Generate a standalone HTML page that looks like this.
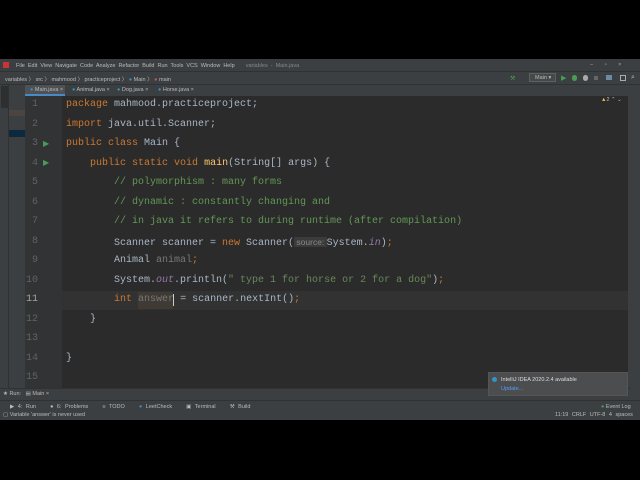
<!DOCTYPE html>
<html><head><meta charset="utf-8"><style>
*{margin:0;padding:0;box-sizing:border-box}
body{width:640px;height:480px;background:#000;position:relative;overflow:hidden;font-family:"Liberation Sans",sans-serif}
.a{position:absolute}
.ui{font-size:5.5px;color:#bbb;white-space:nowrap}
.code{font-family:"Liberation Mono",monospace;font-size:10px;color:#a9b7c6;white-space:pre;position:absolute;left:66px;line-height:12px}
.k{color:#cc7832}.c{color:#629755}.s{color:#6a8759}.g{color:#787878}.p{color:#9876aa;font-style:italic}
.ln{position:absolute;left:24px;width:14px;text-align:right;font-family:"Liberation Mono",monospace;font-size:10px;color:#606366}
</style></head><body>
<div class="a" style="left:0;top:59px;width:640px;height:361px;background:#3c3f41"></div>
<div class="a ui" style="left:3px;top:62px;width:6px;height:6px;background:#c33"></div>
<div class="a ui" style="left:16px;top:63px;word-spacing:1.5px">File Edit View Navigate Code Analyze Refactor Build Run Tools VCS Window Help <span style="color:#888;margin-left:8px">variables - Main.java</span></div>
<div class="a ui" style="left:590px;top:62px;color:#aaa;word-spacing:10px">– ▫ ×</div>
<div class="a" style="left:0;top:71px;width:640px;height:1px;background:#2f3133"></div>
<div class="a ui" style="left:5px;top:75px">variables 〉 src 〉 mahmood 〉 practiceproject 〉 <span style="color:#3592c4">●</span> Main 〉 <span style="color:#c75450">●</span> main</div>
<div class="a" style="left:529px;top:73px;width:27px;height:9px;border:1px solid #5e6060;background:#45494a"></div>
<div class="a ui" style="left:535px;top:75px">Main ▾</div>
<div class="a" style="left:510px;top:75px;color:#499c54;font-size:6px">⚒</div>
<div class="a" style="left:561px;top:74px;color:#499c54;font-size:7px">▶</div>
<div class="a" style="left:572px;top:75px;width:5px;height:6px;border-radius:3px;background:#499c54"></div>
<div class="a" style="left:583px;top:75px;width:5px;height:6px;border-radius:3px;background:#aaa"></div>
<div class="a" style="left:594px;top:76px;width:4px;height:4px;background:#666"></div>
<div class="a" style="left:606px;top:75px;width:6px;height:5px;background:#6a8ba6"></div>
<div class="a" style="left:620px;top:75px;width:6px;height:6px;border:1px solid #aaa"></div>
<div class="a ui" style="left:631px;top:74px;font-size:7px">⌕</div>
<div class="a" style="left:0;top:84px;width:640px;height:1px;background:#2f3133"></div>
<div class="a" style="left:0;top:85px;width:9px;height:315px;background:#3c3f41;border-right:1px solid #2f3133"></div>
<div class="a" style="left:1px;top:86px;width:7px;height:22px;background:#2d2f30"></div>
<div class="a" style="left:9px;top:85px;width:16px;height:303px;background:#3c3f41"></div>
<div class="a" style="left:9px;top:110px;width:16px;height:6px;background:#4a4540"></div>
<div class="a" style="left:9px;top:130px;width:16px;height:7px;background:#0d293e"></div>
<div class="a" style="left:25px;top:85px;width:605px;height:11px;background:#3c3f41"></div>
<div class="a" style="left:25px;top:85px;width:40px;height:11px;background:#4e5254;border-bottom:2px solid #4a88c7"></div>
<div class="a ui" style="left:30px;top:87px"><span style="color:#3592c4">●</span> Main.java ×</div>
<div class="a ui" style="left:72px;top:87px"><span style="color:#3592c4">●</span> Animal.java ×</div>
<div class="a ui" style="left:117px;top:87px"><span style="color:#3592c4">●</span> Dog.java ×</div>
<div class="a ui" style="left:158px;top:87px"><span style="color:#3592c4">●</span> Horse.java ×</div>
<div class="a" style="left:25px;top:96px;width:37px;height:292px;background:#313335"></div>
<div class="a" style="left:62px;top:96px;width:566px;height:292px;background:#2b2b2b"></div>
<div class="a" style="left:630px;top:85px;width:10px;height:315px;background:#3c3f41"></div>
<div class="a" style="left:62px;top:291px;width:566px;height:19px;background:#323232"></div>
<div class="a" style="left:138px;top:292px;width:35px;height:17px;background:#3f3a33"></div>
<div class="a" style="left:173px;top:294px;width:1px;height:12px;background:#ccc"></div>
<div class="a ui" style="left:601px;top:97px;color:#bbb"><span style="color:#e0b84a">▲</span>2 ⌃ ⌄</div>
<div class="a" style="left:43px;top:139px;color:#499c54;font-size:8px">▶</div>
<div class="a" style="left:43px;top:158px;color:#499c54;font-size:8px">▶</div>
<div class="ln" style="top:99px">1</div><div class="ln" style="top:119px">2</div><div class="ln" style="top:138px">3</div><div class="ln" style="top:158px">4</div><div class="ln" style="top:177px">5</div><div class="ln" style="top:197px">6</div><div class="ln" style="top:216px">7</div><div class="ln" style="top:236px">8</div><div class="ln" style="top:255px">9</div><div class="ln" style="top:275px">10</div><div class="ln" style="top:294px;color:#a4a3a3">11</div><div class="ln" style="top:314px">12</div><div class="ln" style="top:333px">13</div><div class="ln" style="top:353px">14</div><div class="ln" style="top:372px">15</div>
<div class="code" style="top:99px"><span class="k">package</span> mahmood.practiceproject;</div>
<div class="code" style="top:119px"><span class="k">import</span> java.util.Scanner;</div>
<div class="code" style="top:138px"><span class="k">public class</span> Main {</div>
<div class="code" style="top:158px">    <span class="k">public static void</span> <span style="color:#ffc66d">main</span>(String[] args) {</div>
<div class="code c" style="top:177px">        // polymorphism : many forms</div>
<div class="code c" style="top:197px">        // dynamic : constantly changing and</div>
<div class="code c" style="top:216px">        // in java it refers to during runtime (after compilation)</div>
<div class="code" style="top:236px">        Scanner scanner = <span class="k">new</span> Scanner(<span style="background:#3b3b3b;color:#888;font-family:'Liberation Sans',sans-serif;font-size:8.5px"> source: </span>System.<span class="p">in</span>)<span class="k">;</span></div>
<div class="code" style="top:255px">        Animal <span class="g">animal</span><span class="k">;</span></div>
<div class="code" style="top:275px">        System.<span class="p">out</span>.println(<span class="s">" type 1 for horse or 2 for a dog"</span>)<span class="k">;</span></div>
<div class="code" style="top:294px">        <span class="k">int</span> <span class="g">answer</span> = scanner.nextInt()<span class="k">;</span></div>
<div class="code" style="top:314px">    }</div>
<div class="code" style="top:353px">}</div>
<div class="a" style="left:0;top:388px;width:630px;height:12px;background:#3c3f41;border-top:1px solid #2f3133"></div>
<div class="a ui" style="left:3px;top:391px">★ Run: &nbsp;&nbsp;▤ Main ×</div>
<div class="a" style="left:0;top:400px;width:640px;height:1px;background:#2f3133"></div>
<div class="a ui" style="left:10px;top:404px;word-spacing:2px">▶ 4: Run &nbsp;&nbsp; ● 6: Problems &nbsp;&nbsp; ≡ TODO &nbsp;&nbsp; <span style="color:#3592c4">●</span> LeetCheck &nbsp;&nbsp; ▣ Terminal &nbsp;&nbsp; ⚒ Build</div>
<div class="a ui" style="left:601px;top:404px"><span style="color:#499c54">●</span> Event Log</div>
<div class="a ui" style="left:3px;top:412px">▢ Variable 'answer' is never used</div>
<div class="a ui" style="left:555px;top:412px;word-spacing:2px">11:19 CRLF UTF-8 4 spaces</div>
<!-- notification on top -->
<div class="a" style="left:488px;top:372px;width:140px;height:24px;background:#4b4d4f;border:1px solid #555"></div>
<div class="a" style="left:492px;top:377px;width:5px;height:5px;border-radius:3px;background:#3592c4"></div>
<div class="a ui" style="left:501px;top:377px;color:#ddd">IntelliJ IDEA 2020.2.4 available</div>
<div class="a ui" style="left:501px;top:386px;color:#589df6">Update...</div>
</body></html>
